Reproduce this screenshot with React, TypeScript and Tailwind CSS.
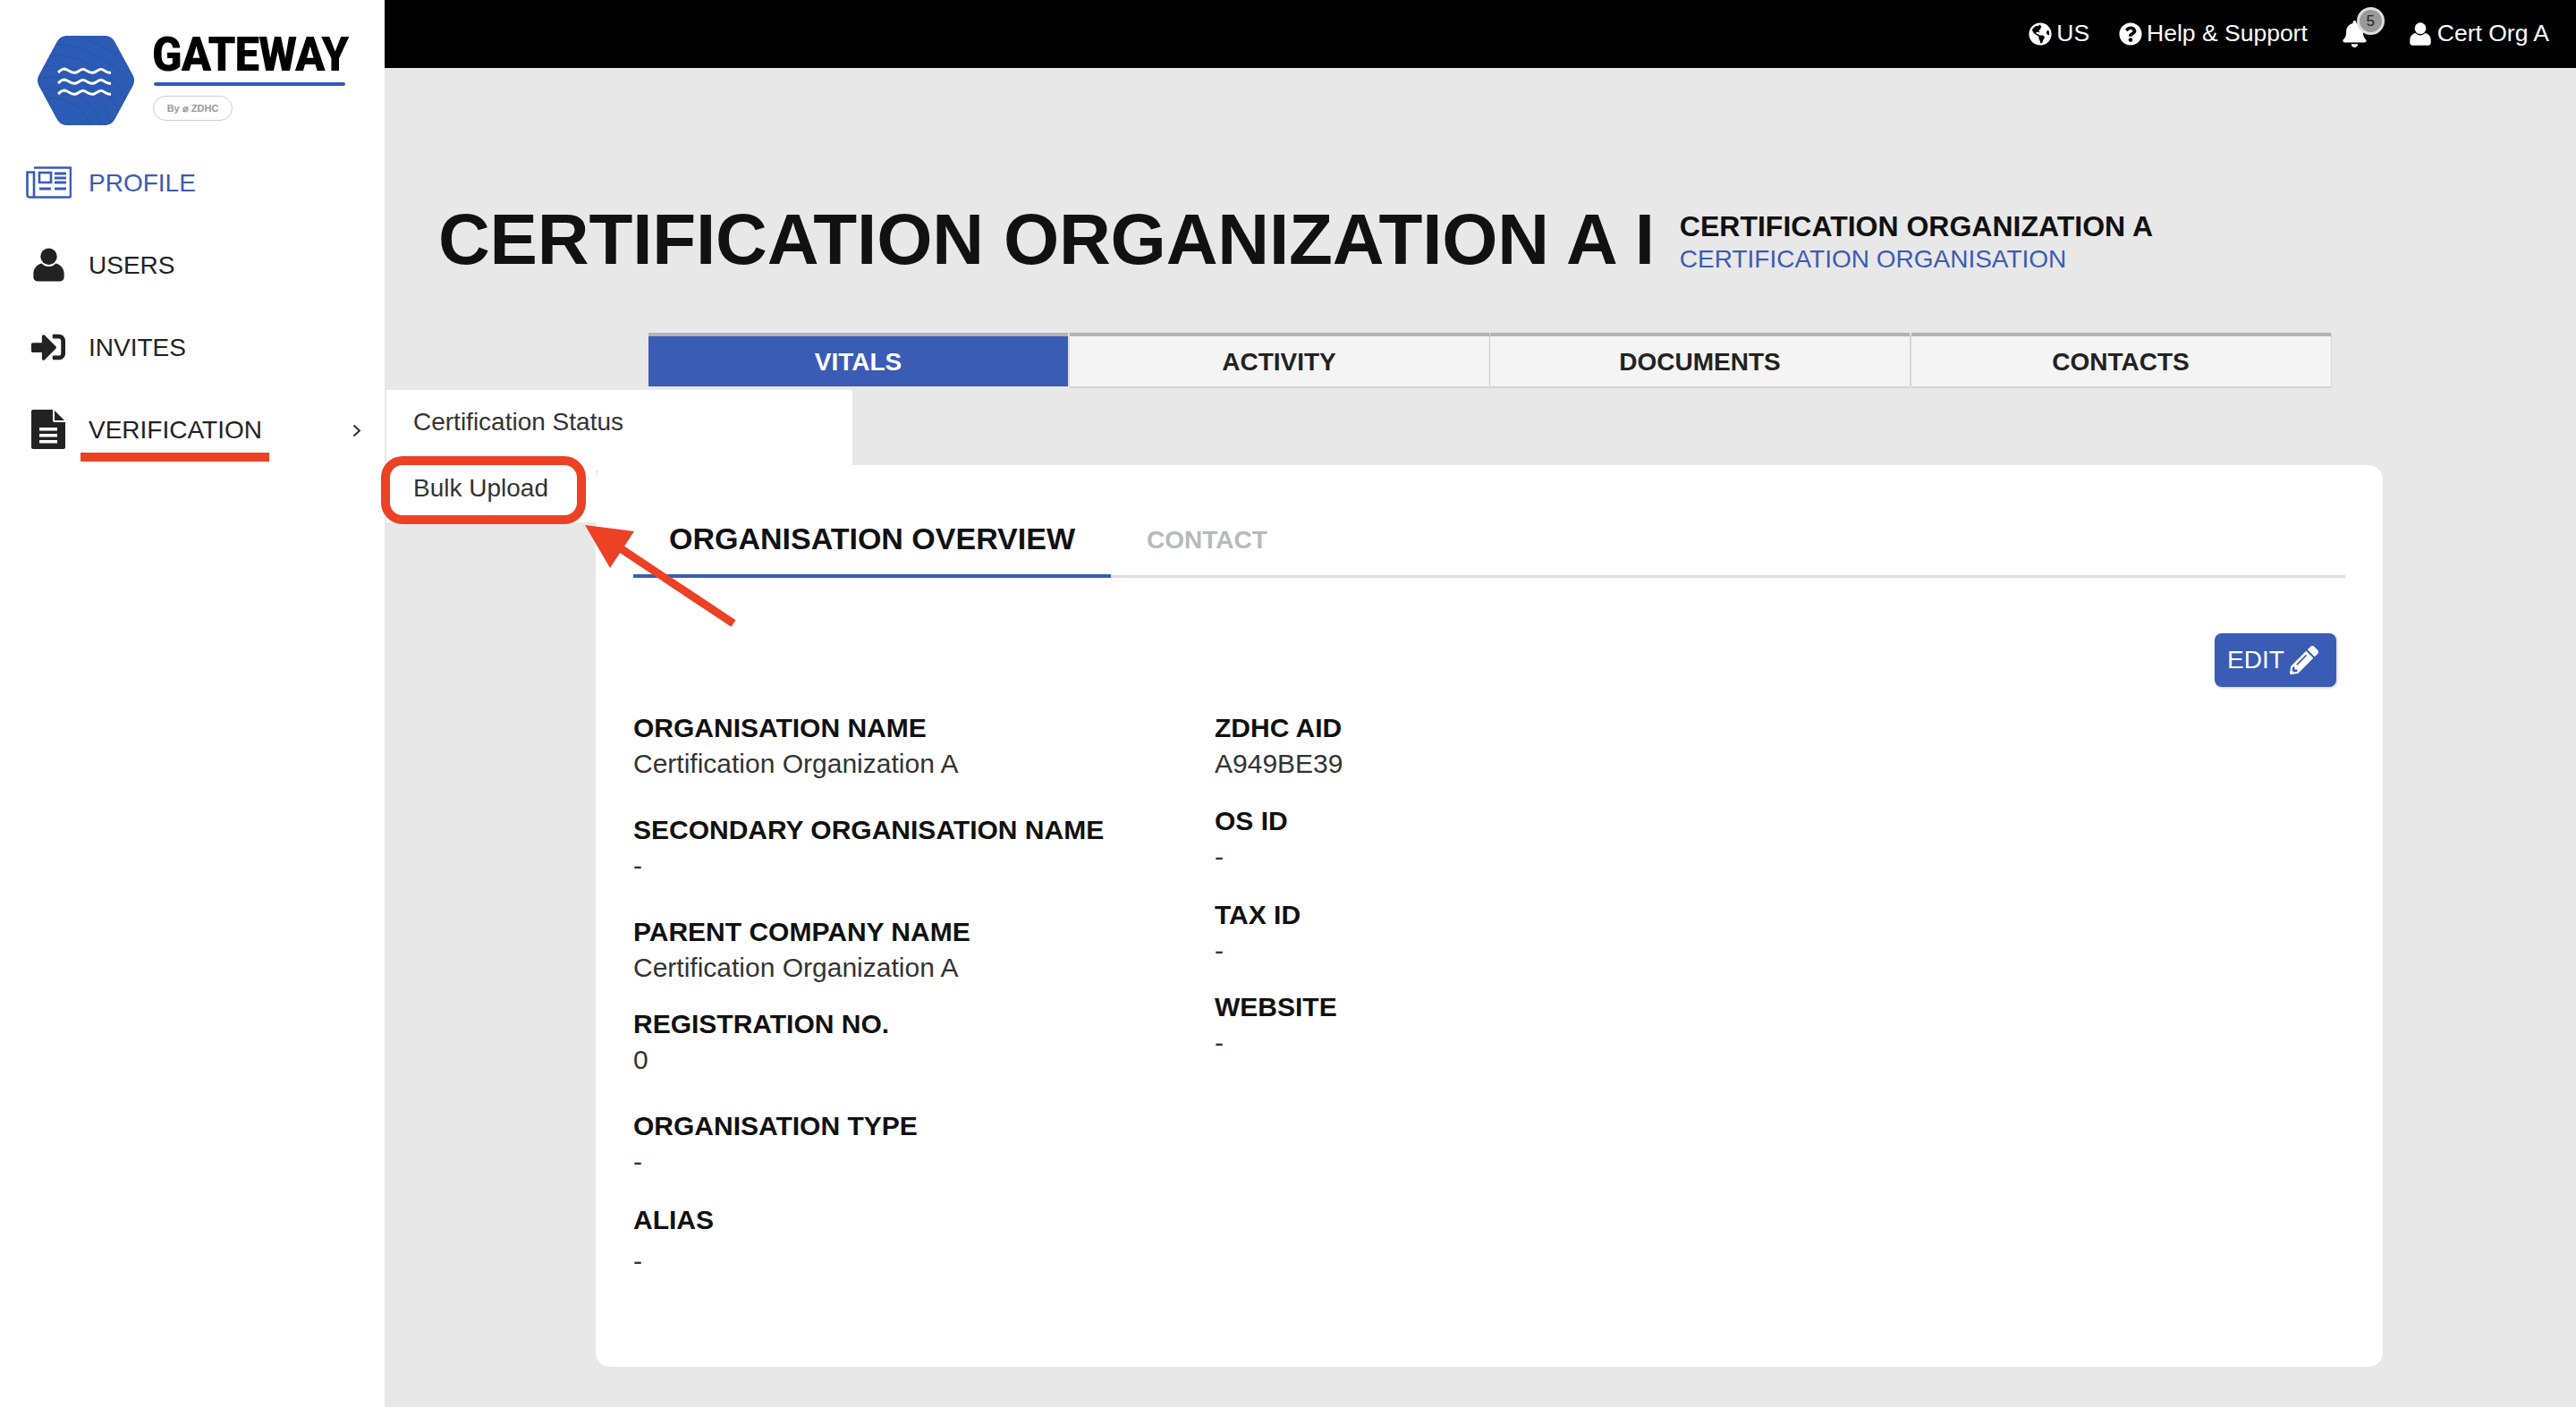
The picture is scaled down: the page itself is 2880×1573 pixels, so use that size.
import { FaBell, FaGlobeAmericas, FaPencilAlt, FaQuestionCircle, FaSignInAlt } from "react-icons/fa";

const font = "font-['Liberation_Sans',Arial,sans-serif]";

function UserIcon({ className }: { className?: string }) {
    return (
        <svg viewBox="0 0 36 38" className={className} fill="currentColor">
            <circle cx="18" cy="9.5" r="9.5" />
            <path d="M10 17.5c2 2.6 4.8 3.6 8 3.6s6-1 8-3.6c5 1 9 5 9.6 10.500v5.500c0 2.500-1.800 4.500-4.300 4.500H4.700C2.200 38 .4 36 .4 33.500V28C1 22.500 5 18.500 10 17.500z" />
        </svg>
    );
}

function NewspaperIcon({ className }: { className?: string }) {
    return (
        <svg viewBox="0 0 51 36" className={className} fill="none" stroke="currentColor" strokeWidth="2.600">
            <path d="M9 1.500h41V33a1.500 1.500 0 0 1-1.500 1.500H4A2.500 2.500 0 0 1 1.500 32V6.500H9V34" />
            <rect x="15" y="7" width="13" height="11" />
            <path d="M32 8h13M32 13h13M32 18h13M15 25h13M32 25h13" strokeWidth="3" />
        </svg>
    );
}

function DocIcon({ className }: { className?: string }) {
    return (
        <svg viewBox="0 0 38 44" className={className} fill="currentColor">
            <path d="M2 0h22v12a2 2 0 0 0 2 2h12v28a2 2 0 0 1-2 2H2a2 2 0 0 1-2-2V2a2 2 0 0 1 2-2z" />
            <path d="M26 1l11 11H26z" />
            <path d="M9 20h20v3.500H9zM9 27h20v3.500H9zM9 34h20v3.500H9z" fill="#fff" />
        </svg>
    );
}

function Logo() {
    return (
        <svg viewBox="0 0 110 100" className="w-[110px] h-[100px]">
            <defs>
                <clipPath id="hex">
                    <path d="M34 0h42c5 0 9 2.500 11.500 7l20 37c2 3.800 2 8.200 0 12l-20 37c-2.500 4.500-6.500 7-11.500 7H34c-5 0-9-2.500-11.500-7l-20-37c-2-3.800-2-8.200 0-12l20-37C25 2.500 29 0 34 0z" />
                </clipPath>
            </defs>
            <g clipPath="url(#hex)">
                <rect width="110" height="100" fill="#2b5bb5" />
                <g fill="none" stroke="#24509f" strokeWidth="0.700">
                    <circle cx="20" cy="110" r="40" />
                    <circle cx="20" cy="110" r="52" />
                    <circle cx="20" cy="110" r="64" />
                    <circle cx="20" cy="110" r="76" />
                    <circle cx="20" cy="110" r="88" />
                    <circle cx="20" cy="110" r="100" />
                    <circle cx="20" cy="110" r="112" />
                </g>
            </g>
            <g fill="none" stroke="#fff" strokeWidth="3">
                <path d="M24 41c4-3.500 6-5 10-3s6 4.500 10 3 6-5 10-3 6 4.500 10 3 6-5 10-3c3 1.500 4 3 9 3.500" />
                <path d="M24 53c4-3.500 6-5 10-3s6 4.500 10 3 6-5 10-3 6 4.500 10 3 6-5 10-3c3 1.500 4 3 9 3.500" />
                <path d="M24 65c4-3.500 6-5 10-3s6 4.500 10 3 6-5 10-3 6 4.500 10 3 6-5 10-3c3 1.500 4 3 9 3.500" />
            </g>
        </svg>
    );
}

function NavItem({ icon, label, active, children }: { icon: React.ReactNode; label: string; active?: boolean; children?: React.ReactNode }) {
    return (
        <div className={`h-[92px] flex items-center text-[28px] ${active ? "text-[#3a5cb4]" : "text-[#222222]"}`}>
            <div className="w-[99px] flex justify-center pl-[27px] pr-[18px] shrink-0 -mt-[3px]">{icon}</div>
            <span>{label}</span>
            {children}
        </div>
    );
}

function Field({ label, value, className, valueClassName }: { label: string; value: string; className?: string; valueClassName?: string }) {
    return (
        <div className={className}>
            <div className="h-[40px] leading-[40px] text-[30px] font-bold text-[#111111] whitespace-nowrap">{label}</div>
            <div className={`h-[40px] leading-[40px] text-[30px] text-[#333333] whitespace-nowrap ${valueClassName ?? ""}`}>{value}</div>
        </div>
    );
}

const tabs = ["VITALS", "ACTIVITY", "DOCUMENTS", "CONTACTS"];

export default function App() {
    return (
        <div className={`${font} relative w-[2880px] h-[1573px] overflow-hidden flex bg-[#e8e8e8]`}>
            <aside className="w-[430px] h-full bg-white shrink-0">
                <div className="h-[159px] pt-[40px] pl-[41px] flex gap-[20px]">
                    <Logo />
                    <div className="flex flex-col items-start">
                        <div className="h-[40px] leading-[42px] text-[53px] font-black font-['Roboto',sans-serif] text-black origin-left scale-x-[0.93] tracking-[-1px] -ml-[1px] whitespace-nowrap">GATEWAY</div>
                        <div className="mt-[12px] ml-[1px] w-[214px] h-[4px] rounded-full bg-[#2d5cb8]" />
                        <div className="mt-[11px] w-[89px] h-[28px] rounded-full border border-[#cccccc] flex items-center justify-center text-[11px] text-[#999999] font-bold whitespace-nowrap">By ⌀ ZDHC</div>
                    </div>
                </div>
                <NavItem active label="PROFILE" icon={<NewspaperIcon className="w-[51px] h-[36px] shrink-0" />} />
                <NavItem label="USERS" icon={<UserIcon className="w-[35px] h-[38px] shrink-0" />} />
                <NavItem label="INVITES" icon={<FaSignInAlt className="w-[38px] h-[38px] shrink-0" />} />
                <NavItem label="VERIFICATION" icon={<DocIcon className="w-[38px] h-[44px] shrink-0" />}>
                    <svg viewBox="0 0 10 14" className="ml-auto mr-[26px] w-[10px] h-[15px]" fill="none" stroke="#222222" strokeWidth="1.800">
                        <path d="M1.500 1l6.500 6-6.500 6" />
                    </svg>
                </NavItem>
            </aside>

            <main className="flex-1 min-w-0">
                <header className="h-[76px] bg-black text-white text-[26.5px] flex items-center justify-end pr-[30px]">
                    <FaGlobeAmericas className="w-[26px] h-[26px]" />
                    <span className="ml-[5px]">US</span>
                    <FaQuestionCircle className="ml-[33px] w-[26px] h-[26px]" />
                    <span className="ml-[5px]">Help &amp; Support</span>
                    <div className="relative ml-[39px] w-[27px]">
                        <FaBell className="w-[27px] h-[30px]" />
                        <div className="absolute left-[16px] top-[-15px] w-[31px] h-[31px] rounded-full bg-[#999999] border-[3px] border-[#dddddd] flex items-center justify-center text-[17px] text-[#222222]">5</div>
                    </div>
                    <UserIcon className="ml-[48px] w-[24px] h-[26px]" />
                    <span className="ml-[7px]">Cert Org A</span>
                </header>

                <div className="mt-[144px] ml-[60px] h-[96px] flex items-center">
                    <h1 className="text-[80px] font-bold text-[#111111] leading-[96px] whitespace-nowrap tracking-[-0.15px]">CERTIFICATION ORGANIZATION A I</h1>
                    <div className="ml-[28px] pt-[6px]">
                        <div className="text-[32px] font-bold leading-[37px] text-[#111111] whitespace-nowrap">CERTIFICATION ORGANIZATION A</div>
                        <div className="text-[28px] leading-[35px] text-[#3a5cb4] whitespace-nowrap">CERTIFICATION ORGANISATION</div>
                    </div>
                </div>

                <div className="mt-[56px] ml-[295px] w-[1882px] flex text-[28px] font-bold">
                    {tabs.map((tab, index) => (
                        <div
                            key={tab}
                            className={`h-[60px] border-t-[4px] border-[#b3b3b3] pt-[2px] flex items-center justify-center ${
                                index === 0 ? "w-[469px] bg-[#3a5cb4] text-white" : "w-[469px] bg-[#f4f4f4] text-[#222222] ml-[1.5px] shadow-[0_1px_2px_rgba(0,0,0,0.2)]"
                            }`}
                        >
                            {tab}
                        </div>
                    ))}
                </div>

                <section className="mt-[88px] ml-[236px] w-[1998px] h-[1008px] bg-white rounded-[16px] px-[42px] pt-[52px]">
                    <div className="h-[74px] flex border-b-[3px] border-[#dddddd]">
                        <div className="w-[534px] h-[74px] border-b-[4px] border-[#3a5cb4] flex justify-center pt-[6px] text-[34px] font-bold text-[#111111] leading-[48px] whitespace-nowrap">ORGANISATION OVERVIEW</div>
                        <div className="ml-[40px] pt-[10px] text-[28px] font-bold text-[#b5bbbb] leading-[44px]">CONTACT</div>
                    </div>
                    <div className="flex justify-end mt-[62px] pr-[10px]">
                        <button className="w-[136px] h-[60px] bg-[#3a5cb4] rounded-[8px] pr-[6px] text-white text-[28px] flex items-center justify-center gap-[6px] shadow-[1px_1px_3px_rgba(0,0,0,0.2)]">
                            EDIT
                            <FaPencilAlt className="w-[32px] h-[32px]" />
                        </button>
                    </div>
                    <div className="flex mt-[26px]">
                        <div className="w-[650px]">
                            <Field label="ORGANISATION NAME" value="Certification Organization A" className="mb-[34px]" />
                            <Field label="SECONDARY ORGANISATION NAME" value="-" className="mb-[34px]" />
                            <Field label="PARENT COMPANY NAME" value="Certification Organization A" className="mb-[23px]" />
                            <Field label="REGISTRATION NO." value="0" className="mb-[34px]" />
                            <Field label="ORGANISATION TYPE" value="-" className="mb-[25px]" />
                            <Field label="ALIAS" value="-" valueClassName="mt-[6px]" />
                        </div>
                        <div>
                            <Field label="ZDHC AID" value="A949BE39" className="mb-[24px]" />
                            <Field label="OS ID" value="-" className="mb-[25px]" />
                            <Field label="TAX ID" value="-" className="mb-[23px]" />
                            <Field label="WEBSITE" value="-" />
                        </div>
                    </div>
                </section>
            </main>

            {/* flyout from the verification item */}
            <div className="absolute left-[432px] top-[436px] text-[28px] text-[#333333]">
                <div className="w-[521px] h-[90px] bg-white pl-[30px] pt-[18px] leading-[36px]">Certification Status</div>
                <div className="w-[234px] h-[58px] bg-white pl-[30px] pt-[2px] leading-[36px]">Bulk Upload</div>
            </div>

            {/* red annotations on the screenshot */}
            <div className="absolute left-[90px] top-[506px] w-[211px] h-[10px] bg-[#ec4125]" />
            <div className="absolute left-[426px] top-[510px] w-[229px] h-[76px] border-[10px] border-[#ec4125] rounded-[24px]" />
            <svg className="absolute left-[640px] top-[580px] w-[190px] h-[125px]" viewBox="640 580 190 125">
                <path d="M654 587l55 7-27 41z" fill="#ec4125" />
                <path d="M692 612l128 85" stroke="#ec4125" strokeWidth="9" fill="none" />
            </svg>
        </div>
    );
}
